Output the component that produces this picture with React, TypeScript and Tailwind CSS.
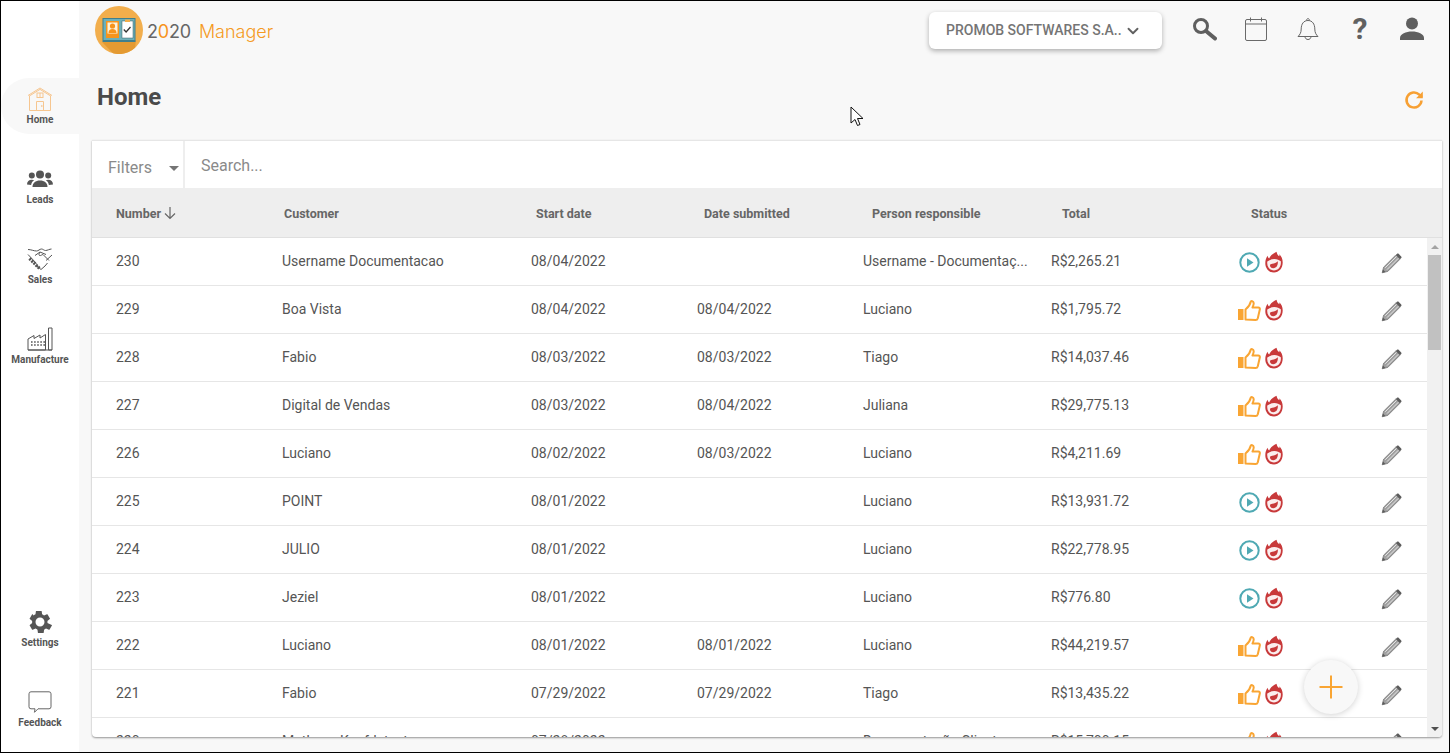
import React from "react";
import { ChevronDown } from "lucide-react";

type Row = [string, string, string, string, string, string, "play" | "up"];
const rows: Row[] = [
  ["230", "Username Documentacao", "08/04/2022", "", "Username - Documentaç...", "R$2,265.21", "play"],
  ["229", "Boa Vista", "08/04/2022", "08/04/2022", "Luciano", "R$1,795.72", "up"],
  ["228", "Fabio", "08/03/2022", "08/03/2022", "Tiago", "R$14,037.46", "up"],
  ["227", "Digital de Vendas", "08/03/2022", "08/04/2022", "Juliana", "R$29,775.13", "up"],
  ["226", "Luciano", "08/02/2022", "08/03/2022", "Luciano", "R$4,211.69", "up"],
  ["225", "POINT", "08/01/2022", "", "Luciano", "R$13,931.72", "play"],
  ["224", "JULIO", "08/01/2022", "", "Luciano", "R$22,778.95", "play"],
  ["223", "Jeziel", "08/01/2022", "", "Luciano", "R$776.80", "play"],
  ["222", "Luciano", "08/01/2022", "08/01/2022", "Luciano", "R$44,219.57", "up"],
  ["221", "Fabio", "07/29/2022", "07/29/2022", "Tiago", "R$13,435.22", "up"],
  ["220", "Matheus Kaufdetest", "07/28/2022", "", "Documentação Cliente", "R$15,700.15", "up"],
];

function Flame() {
  return (
    <svg width="18" height="23" viewBox="0 0 18 23" fill="none" className="shrink-0">
      <path d="M11.500.8c.6 2.600 1.600 3.800 2.800 4.500.2-.8.200-1.300.1-2 2 2 3.300 4.800 3.300 8.300 0 5.800-3.800 10-8.700 10S.3 17.400.3 12.200c0-2.800.8-5.300 2.200-7.400.3 1.300.9 2.200 1.700 2.700C5.200 4.500 8.200 2.500 11.500.8z" fill="#c8393a" />
      <path d="M2.300 10.500c2-1.600 4.200-2.600 7-2.600 2.800 0 5 .9 6.500 2.400.7 5.200-2.300 9.100-6.900 9.100-4.400 0-7.300-4.200-6.600-8.900z" fill="#fbeeee" />
      <path d="M12.800 10.300c.4 3.800-1.300 6.900-4.500 6.900-2 0-3.300-1.200-3.300-2.700 0-1 1-1.600 2.300-1.700 2-.2 4-.8 5.500-2.500z" fill="#c8393a" />
    </svg>
  );
}

function Play() {
  return (
    <svg width="21" height="21" viewBox="0 0 21 21" fill="none" className="ml-px shrink-0">
      <circle cx="10.500" cy="10.500" r="9.200" stroke="#4fa9b3" strokeWidth="2" />
      <path d="M8 6.200l6.500 4.300L8 14.800z" fill="#4fa9b3" />
    </svg>
  );
}

function Thumb() {
  return (
    <svg width="23" height="21" viewBox="0 0 23 21" fill="none" className="shrink-0">
      <rect x="0" y="9" width="5.500" height="11" fill="#f9a533" />
      <path d="M7.500 19.500V9.500c2.500-2 4.500-4.300 5.200-7.800.2-1 2.800-.8 3 1.300.1 1.600-.5 3.200-1.200 4.500h5.800c1.200 0 1.800 1 1.500 2.100l-2 8.600c-.3 1-1 1.800-2.200 1.800z" stroke="#f9a533" strokeWidth="2" strokeLinejoin="round" />
    </svg>
  );
}

function Pencil() {
  return (
    <svg width="21" height="21" viewBox="0 0 21 21" fill="none">
      <path d="M1.200 19.800l1.400-5.600L14.800 2l4.200 4.200L6.800 18.400z" fill="#a0a0a0" stroke="#7a7a7a" strokeWidth=".8" />
      <path d="M4.200 14.800L15.600 3.400M6 16.600L17.400 5.200" stroke="#ececec" strokeWidth=".9" />
      <path d="M14.800 2l1.200-1.200c.5-.5 1.100-.5 1.600 0l2.600 2.600c.5.500.5 1.100 0 1.600L19 6.200z" fill="#5c5c5c" />
      <path d="M1.200 19.800l.8-3.200 2.400 2.400z" fill="#5c5c5c" />
    </svg>
  );
}

function Logo() {
  return (
    <svg width="48" height="48" viewBox="0 0 48 48" className="shrink-0">
      <circle cx="24" cy="24" r="24" fill="#f2ae4c" />
      <path d="M41 34L40 41.800A24 24 0 0 1 18 47.200L7 36z" fill="#e49a32" />
      <rect x="7.500" y="12" width="33" height="24" fill="#3f7f8e" />
      <rect x="8.500" y="13" width="31" height="21" fill="#6eb0b9" />
      <rect x="11" y="15" width="13" height="17" fill="#f7941d" />
      <rect x="12.500" y="16.500" width="10" height="11" fill="#fff3dc" />
      <circle cx="17.500" cy="20" r="2.600" fill="#f7941d" />
      <path d="M13.500 27c0-3 1.600-4 4-4s4 1 4 4z" fill="#f7941d" />
      <rect x="27" y="15" width="11" height="17" fill="#ffffff" stroke="#3f5f6a" strokeWidth=".5" />
      <rect x="30" y="13.500" width="5" height="2.500" fill="#f2ae4c" />
      <path d="M28.800 23.500l2.300 2.500 4.400-5" stroke="#333" strokeWidth="1.300" fill="none" />
    </svg>
  );
}

function HomeIcon() {
  return (
    <svg width="26" height="24" viewBox="0 0 26 24" fill="none" stroke="#f6c690" strokeWidth="1">
      <path d="M1 8.500L13 1l12 7.500M2 9.200l11-6.800 11 6.800" />
      <path d="M2.500 9v14.500h21V9" />
      <rect x="10" y="6" width="6" height="4.500" />
      <path d="M13 6v4.500" />
      <path d="M9.500 23.500v-9h7v9" />
      <circle cx="14.800" cy="19" r=".5" />
    </svg>
  );
}

function LeadsIcon() {
  return (
    <svg width="26" height="18" viewBox="0 0 26 18" fill="#555">
      <circle cx="13" cy="4.500" r="4" />
      <circle cx="4.800" cy="5.500" r="3" />
      <circle cx="21.200" cy="5.500" r="3" />
      <path d="M5.500 17c0-4 3-6.500 7.500-6.500s7.500 2.500 7.500 6.500z" />
      <path d="M0 14.500c0-3 2-4.800 4.800-4.800 1 0 1.800.2 2.400.6-1.600 1-2.800 2.400-3.100 4.700zM26 14.500c0-3-2-4.800-4.800-4.800-1 0-1.800.2-2.400.6 1.600 1 2.800 2.400 3.100 4.700z" />
    </svg>
  );
}

function SalesIcon() {
  return (
    <svg width="26" height="24" viewBox="0 0 26 24" fill="none" stroke="#555" strokeWidth="1">
      <path d="M1 2.500c3 0 6 1.500 8.500 1.500 2 0 3-2 5-2 1.500 0 2.500 1.500 4 1.500 2 0 4-1.500 6-1.500" />
      <path d="M1 7.500l8.500 9M25 8l-6 5.500" />
      <path d="M8 8.500l5-3.500 6 2.500M13 5c-1 2-1.500 3-.5 3.500 1.200.5 2.500-1 3.500-1l6 6" />
      <path d="M2.500 11.500l10 10" stroke="#555" strokeWidth="3.200" strokeDasharray="2 1" />
      <path d="M10 19l4 3.500 4-3.500 2.500-3" />
    </svg>
  );
}

function FactoryIcon() {
  return (
    <svg width="26" height="24" viewBox="0 0 26 24" fill="none" stroke="#555" strokeWidth="1">
      <path d="M1 23V12l6-3.500v3l6-3.500v3l5.500-3.500V23z" />
      <path d="M21.500 23V1h3.500v22zM1 23h24" />
      <path d="M4 15h14M4 18h14" stroke="#555" strokeWidth="1.600" strokeDasharray="1.600 1.500" />
    </svg>
  );
}

function SettingsIcon() {
  return (
    <svg width="24" height="24" viewBox="0 0 24 24" fill="#555">
      <path d="M19.400 13c.1-.3.100-.7.100-1s0-.700-.1-1l2.400-1.900c.2-.2.300-.5.100-.7l-2.300-4c-.1-.2-.4-.3-.7-.2l-2.900 1.200c-.6-.4-1.200-.8-1.900-1.100l-.4-3c-.1-.2-.3-.4-.6-.4h-4.600c-.3 0-.5.200-.6.400l-.4 3c-.7.300-1.300.7-1.900 1.100L4.700 4.200c-.3-.1-.6 0-.7.200l-2.300 4c-.2.200-.1.500.1.700L4.200 11c-.1.300-.1.700-.1 1s0 .7.100 1l-2.400 1.900c-.2.200-.3.500-.1.700l2.300 4c.1.200.4.300.7.200l2.900-1.200c.6.400 1.200.8 1.900 1.100l.4 3c.1.200.3.400.6.400h4.600c.3 0 .5-.2.600-.4l.4-3c.7-.3 1.300-.7 1.900-1.100l2.900 1.200c.3.100.6 0 .7-.2l2.300-4c.2-.2.100-.5-.1-.7zM12 16.500a4.500 4.500 0 1 1 0-9 4.500 4.500 0 0 1 0 9z" />
    </svg>
  );
}

function FeedbackIcon() {
  return (
    <svg width="24" height="23" viewBox="0 0 24 23" fill="none" stroke="#666" strokeWidth="1">
      <path d="M3 .8h18a2 2 0 0 1 2 2v13a2 2 0 0 1-2 2H10l-3.500 3.500.5-3.500H3a2 2 0 0 1-2-2v-13a2 2 0 0 1 2-2z" />
    </svg>
  );
}

function NavItem({ icon, label, active = false }: { icon: React.ReactNode; label: string; active?: boolean }) {
  return (
    <div className={`flex h-14 w-full flex-col items-center justify-center gap-[2px] rounded-l-[28px] ${active ? "bg-[#f8f8f8]" : ""}`}>
      <div className="flex h-[25px] items-center justify-center">{icon}</div>
      <span className="text-[10px] leading-[12px] font-bold text-[#555555]">{label}</span>
    </div>
  );
}

const headerGrid = "grid grid-cols-[168px_252px_168px_168px_190px_189px_1fr]";
const rowGrid = "grid grid-cols-[166px_249px_166px_166px_188px_187px_143px_1fr]";

export default function App() {
  return (
    <div className="flex h-[753px] w-[1450px] overflow-hidden border border-black bg-[#f8f8f8] [font-family:Roboto,sans-serif]">
      <aside className="flex w-[78px] shrink-0 flex-col items-center bg-white pt-[77px] pb-[15px]">
        <NavItem icon={<HomeIcon />} label="Home" active />
        <div className="mt-6 flex w-full flex-col gap-6">
          <NavItem icon={<LeadsIcon />} label="Leads" />
          <NavItem icon={<SalesIcon />} label="Sales" />
          <NavItem icon={<FactoryIcon />} label="Manufacture" />
        </div>
        <div className="mt-auto flex w-full flex-col gap-6">
          <NavItem icon={<SettingsIcon />} label="Settings" />
          <NavItem icon={<FeedbackIcon />} label="Feedback" />
        </div>
      </aside>

      <main className="relative flex min-w-0 flex-1 flex-col pr-[7px] pl-[13px]">
        <header className="flex h-[60px] shrink-0 items-start">
          <div className="mt-[5px] flex items-center gap-[4px] pl-[3px]">
            <Logo />
            <span className="flex items-baseline pt-[2px] text-[18px] [font-family:Inter,sans-serif]">
              <span className="tracking-[-0.2px] text-[#666666]">2</span>
              <span className="tracking-[-0.2px] text-[#f7941d]">0</span>
              <span className="tracking-[-0.2px] text-[#666666]">20</span>
              <span className="ml-[8px] font-light text-[#f59a23]">Manager</span>
            </span>
          </div>
          <div className="mt-[11px] ml-auto flex items-start">
            <button className="flex h-[37px] w-[233px] items-center gap-[2px] rounded-md bg-white pl-[17px] text-[14px] font-medium text-[#757575] shadow-[0_2px_5px_rgba(0,0,0,0.3)]">
              <span>PROMOB SOFTWARES S.A..</span>
              <ChevronDown size={18} strokeWidth={2.500} className="text-[#616161]" />
            </button>
            <div className="mr-[17px] ml-[29px] flex items-center gap-[26px] pt-[4px]">
              <svg width="26" height="26" viewBox="0 0 26 26" fill="none" stroke="#5f5f5f">
                <circle cx="10" cy="10" r="6.500" strokeWidth="3" />
                <path d="M15 15l9 7.500" strokeWidth="4" strokeLinecap="round" />
              </svg>
              <svg width="26" height="26" viewBox="0 0 26 26" fill="none" stroke="#6a6a6a" strokeWidth="1">
                <rect x="2.500" y="3.500" width="21" height="21" rx="1.500" />
                <path d="M2.500 8h21M7.500 1.500v4M18.500 1.500v4" />
              </svg>
              <svg width="26" height="26" viewBox="0 0 26 26" fill="none" stroke="#666" strokeWidth="1">
                <path d="M3 20.500c2-1.800 3.200-4 3.200-7.500 0-5 2.500-8.500 6.800-8.500s6.800 3.500 6.800 8.500c0 3.500 1.200 5.700 3.200 7.500z" />
                <path d="M11.500 4.500c0-2.500 3-2.500 3 0M10 20.500c0 4 6 4 6 0" />
              </svg>
              <span className="flex w-[26px] justify-center text-[30px] leading-[26px] font-bold text-[#616161]">?</span>
              <svg width="26" height="26" viewBox="0 0 26 26" fill="#5f5f5f">
                <circle cx="13" cy="7.500" r="6" />
                <path d="M1 24v-2c0-4 6-6.500 12-6.500s12 2.500 12 6.500v2z" />
              </svg>
            </div>
          </div>
        </header>

        <div className="flex h-[79px] shrink-0 items-start justify-between">
          <h1 className="mt-[21px] pl-[5px] text-2xl leading-[30px] font-bold text-[#4a4a4a]">Home</h1>
          <svg width="24" height="24" viewBox="0 0 24 24" fill="none" stroke="#f7a033" strokeWidth="2.500" className="mt-[27px] mr-[16px]">
            <path d="M19.500 12.500a7.500 7.500 0 1 1-2.200-5.800L20 9" />
            <path d="M20.800 3.500v6.700h-6.700z" fill="#f7a033" stroke="none" />
          </svg>
        </div>

        <section className="mb-[15px] flex min-h-0 flex-1 flex-col overflow-hidden rounded-b bg-white shadow-[0_1px_2px_rgba(0,0,0,0.4)]">
          <div className="flex h-[48px] shrink-0 border-t border-[#e6e6e6]">
            <div className="flex w-[93px] items-center justify-between border-r-2 border-[#eeeeee] pt-[6px] pr-[4px] pl-[16px] text-base text-[#8a8a8a]">
              <span>Filters</span>
              <span className="mt-[2px] h-0 w-0 border-x-[5px] border-t-[5px] border-x-transparent border-t-[#757575]" />
            </div>
            <div className="flex flex-1 items-center pt-[2px] pl-[16px] text-base text-[#8a8a8a]">Search...</div>
          </div>

          <div className={`${headerGrid} h-[50px] shrink-0 items-center border-b border-[#e0e0e0] bg-[#eeeeee] pt-[3px] pl-[24px] text-[12.5px] font-bold text-[#666666]`}>
            <span className="flex items-center gap-[2px]">
              Number
              <svg width="14" height="14" viewBox="0 0 14 14" fill="none" stroke="#666" strokeWidth="1.200" className="-mt-[3px]">
                <path d="M7 1v11.500M2 7.500l5 5 5-5" />
              </svg>
            </span>
            <span>Customer</span>
            <span>Start date</span>
            <span>Date submitted</span>
            <span>Person responsible</span>
            <span>Total</span>
            <span>Status</span>
          </div>

          <div className="flex min-h-0 flex-1">
            <div className="min-w-0 flex-1 overflow-hidden">
              {rows.map((r) => (
                <div key={r[0]} className={`${rowGrid} h-[48px] items-center border-b border-[#e6e6e6] pb-[2px] pl-[24px] text-sm text-[#555555]`}>
                  <span>{r[0]}</span>
                  <span>{r[1]}</span>
                  <span>{r[2]}</span>
                  <span>{r[3]}</span>
                  <span>{r[4]}</span>
                  <span>{r[5]}</span>
                  <span className="flex items-center pt-[4px]">
                    <span className="flex w-[27px] shrink-0">{r[6] === "play" ? <Play /> : <Thumb />}</span>
                    <Flame />
                  </span>
                  <span className="flex pt-[5px]"><Pencil /></span>
                </div>
              ))}
            </div>
            <div className="flex w-[15px] shrink-0 flex-col items-center bg-[#f1f1f1]">
              <div className="flex h-[17px] items-center justify-center">
                <span className="h-0 w-0 border-x-[4px] border-b-[4px] border-x-transparent border-b-[#a3a3a3]" />
              </div>
              <div className="h-[95px] w-[13px] bg-[#c1c1c1]" />
              <div className="mt-auto flex h-[17px] items-center justify-center">
                <span className="h-0 w-0 border-x-[4px] border-t-[4px] border-x-transparent border-t-[#505050]" />
              </div>
            </div>
          </div>
        </section>

        <button className="absolute top-[659px] right-[91px] flex h-[54px] w-[54px] items-center justify-center rounded-full bg-[#f8f8f8] shadow-[0_1px_6px_rgba(0,0,0,0.18)]">
          <svg width="26" height="26" viewBox="0 0 26 26" stroke="#f9a533" strokeWidth="2" fill="none">
            <path d="M13 1.500v23M1.500 13h23" />
          </svg>
        </button>

        <svg width="16" height="22" viewBox="0 0 16 22" className="absolute top-[105px] left-[771px]">
          <path d="M1 1v16l4-3.500 2.500 6 2.500-1-2.500-6h5.500z" fill="#ffffff" stroke="#111111" strokeWidth="1" />
        </svg>
      </main>
    </div>
  );
}
